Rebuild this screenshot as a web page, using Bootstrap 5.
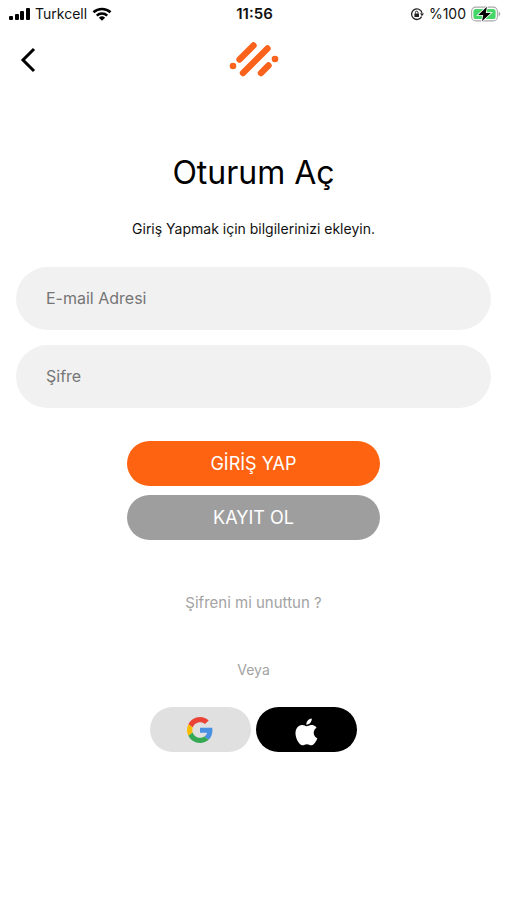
<!DOCTYPE html>
<html lang="tr">
<head>
<meta charset="utf-8">
<meta name="viewport" content="width=device-width, initial-scale=1">
<title>Oturum Aç</title>
<link href="https://cdn.jsdelivr.net/npm/bootstrap@5.3.0/dist/css/bootstrap.min.css" rel="stylesheet">
<style>
  body { font-family: Inter, "Noto Sans", sans-serif; font-size: 14px; line-height: 20px; color: #111; background: #fff; }
  svg { display: block; flex: none; }
  .status-bar { display: grid; grid-template-columns: 1fr auto 1fr; height: 28px; padding: 0 6px 0 8px; }
  .carrier { gap: 5px; }
  .power { gap: 5px; }
  .clock { font-weight: 600; font-size: 15px; }
  .top-nav { display: grid; grid-template-columns: 1fr auto 1fr; padding: 10px 16px; }
  .back { width: 24px; height: 44px; }
  .title { font-size: 32px; line-height: 40px; font-weight: 400; margin-top: 61px; margin-bottom: 26px; color: #000; }
  .field { height: 63px; padding: 0 30px 2px; border: 0; border-radius: 32px; background: #f1f1f1; font-size: 16px; }
  .field:focus { background: #f1f1f1; }
  .field::placeholder { color: #757575; }
  .field + .field { margin-top: 15px; }
  .actions, .social { --bs-gutter-x: 32px; }
  .actions { margin-top: 33px; gap: 9px; }
  .pill { --bs-btn-color: #fff; --bs-btn-hover-color: #fff; --bs-btn-active-color: #fff; height: 45px; padding: 0; border: 0; font-size: 18px; }
  .pill-login { --bs-btn-bg: #fe6312; --bs-btn-hover-bg: #e8560b; --bs-btn-active-bg: #e8560b; }
  .pill-join { --bs-btn-bg: #9e9e9e; --bs-btn-hover-bg: #8c8c8c; --bs-btn-active-bg: #8c8c8c; }
  .pill-google { --bs-btn-bg: #e0e0e0; --bs-btn-hover-bg: #d2d2d2; --bs-btn-active-bg: #d2d2d2; }
  .pill-apple { --bs-btn-bg: #000; --bs-btn-hover-bg: #222; --bs-btn-active-bg: #222; }
  .soft { color: #a3a3a3; }
  .forgot { margin-top: 53px; font-size: 15px; }
  .or-line { margin-top: 47px; margin-bottom: 27px; }
  .social { gap: 5px; }
  .social .pill { width: 20%; }
</style>
<script src="https://cdn.jsdelivr.net/npm/bootstrap@5.3.0/dist/js/bootstrap.bundle.min.js" defer></script>
</head>
<body>
<div class="status-bar align-items-center">
  <div class="carrier d-flex align-items-center">
    <svg width="22" height="14" viewBox="0 0 22 14"><rect x="1" y="9" width="4" height="4" rx="1"/><rect x="7" y="7" width="4" height="6" rx="1"/><rect x="12" y="4" width="4" height="9" rx="1"/><rect x="18" y="1" width="4" height="12" rx="1"/></svg>
    <span>Turkcell</span>
    <svg width="20" height="14" viewBox="0 0 20 14" fill="none" stroke="#000" stroke-width="2.6"><path d="M1.5 5.3C6.2.8 13.8.8 18.5 5.3M4.8 8.6c2.9-2.8 7.5-2.8 10.4 0"/><path d="M10 13.800 6.900 10.700a4.500 4.500 0 0 1 6.200 0Z" fill="#000" stroke="none"/></svg>
  </div>
  <span class="clock">11:56</span>
  <div class="power d-flex align-items-center justify-content-end">
    <svg width="14" height="14" viewBox="0 0 14 14" fill="none" stroke="#222" stroke-width="1.3"><path d="M11.600 9.600A5.300 5.300 0 1 1 12 5.800"/><path d="m10 6.300 4 .2-2.100 2.800Z" fill="#222" stroke="none"/><rect x="4.400" y="6.400" width="4.600" height="3.600" rx=".6" fill="#222" stroke="none"/><path d="M5.400 6.700V5.500a1.300 1.300 0 0 1 2.600 0v1.200" stroke-width="1"/></svg>
    <span>%100</span>
    <svg width="30" height="16" viewBox="0 0 30 16"><rect x=".6" y="1.1" width="25.8" height="13.8" rx="4.2" fill="#fff" stroke="#aaa" stroke-width="1.1"/><rect x="2.4" y="2.9" width="22.2" height="10.2" rx="2.6" fill="#45d667"/><path d="M27.6 5.6c2.2.8 2.2 4 0 4.8Z" fill="#aaa"/><path d="M15.9.8 7.2 8.9h5L11 15.2l8.8-8.1h-5Z" fill="#000" stroke="#fff" stroke-width="1.6" paint-order="stroke"/></svg>
  </div>
</div>
<header class="top-nav align-items-center">
  <button type="button" class="btn border-0 p-0 back d-flex align-items-center justify-content-center" aria-label="Geri">
    <svg width="24" height="28" viewBox="0 0 24 28" fill="none" stroke="#000" stroke-width="3"><path d="M18 3 7 14l11 11"/></svg>
  </button>
  <svg width="50" height="36" viewBox="0 0 50 36" fill="none" stroke="#fb631d" stroke-width="6.4" stroke-linecap="round" role="img" aria-label="Logo"><path d="M10.500 17.500 24.500 3.500M14 31 38.500 6.500M32 31l7.500-7.500"/><circle cx="4" cy="24" r="3.300" fill="#fb631d" stroke="none"/><circle cx="46" cy="17" r="3.300" fill="#fb631d" stroke="none"/></svg>
</header>
<main class="px-3 text-center">
  <h1 class="title">Oturum Aç</h1>
  <p class="mb-0">Giriş Yapmak için bilgilerinizi ekleyin.</p>
  <form class="mt-4 pt-1">
    <input class="form-control field" type="email" placeholder="E-mail Adresi" aria-label="E-mail Adresi">
    <input class="form-control field" type="password" placeholder="Şifre" aria-label="Şifre">
    <div class="actions row flex-column align-items-center">
      <button type="submit" class="btn pill pill-login rounded-pill w-50">GİRİŞ YAP</button>
      <button type="button" class="btn pill pill-join rounded-pill w-50">KAYIT OL</button>
    </div>
  </form>
  <div class="forgot"><a class="soft text-decoration-none" href="#">Şifreni mi unuttun ?</a></div>
  <p class="or-line soft">Veya</p>
  <div class="social row justify-content-center">
    <button type="button" class="btn pill pill-google rounded-pill d-flex align-items-center justify-content-center" aria-label="Google">
      <svg width="26" height="26" viewBox="0 0 48 48"><path fill="#ea4335" d="M24 9.500c3.540 0 6.710 1.220 9.210 3.600l6.850-6.850C35.900 2.380 30.470 0 24 0 14.620 0 6.510 5.380 2.560 13.220l7.980 6.190C12.430 13.720 17.740 9.500 24 9.500z"/><path fill="#4a90e2" d="M46.980 24.550c0-1.570-.15-3.090-.38-4.550H24v9.020h12.940c-.58 2.960-2.260 5.480-4.780 7.180l7.730 6c4.510-4.180 7.090-10.360 7.090-17.650z"/><path fill="#fbbc05" d="M10.530 28.590A14.500 14.500 0 0 1 9.770 24c0-1.600.27-3.140.76-4.590l-7.980-6.190A23.900 23.900 0 0 0 0 24c0 3.880.92 7.540 2.560 10.780l7.970-6.190z"/><path fill="#34a853" d="M24 48c6.480 0 11.930-2.130 15.890-5.810l-7.730-6C30 37.640 27.240 38.490 24 38.490c-6.260 0-11.570-4.220-13.470-9.910l-7.980 6.190C6.510 42.620 14.620 48 24 48z"/></svg>
    </button>
    <button type="button" class="btn pill pill-apple rounded-pill d-flex align-items-center justify-content-center" aria-label="Apple">
      <svg class="mt-1" width="32" height="32" viewBox="0 0 24 24" fill="#fff"><path d="M17.050 12.540c-.03-2.540 2.070-3.760 2.170-3.820-1.180-1.730-3.020-1.960-3.680-1.990-1.570-.16-3.060.92-3.860.92-.79 0-2.020-.9-3.320-.87-1.710.02-3.280.99-4.160 2.520-1.770 3.080-.45 7.640 1.280 10.140.84 1.220 1.850 2.600 3.170 2.550 1.270-.05 1.750-.82 3.290-.82s1.970.82 3.310.8c1.370-.03 2.240-1.250 3.080-2.480.97-1.420 1.370-2.790 1.390-2.870-.03-.01-2.670-1.020-2.670-4.080zM14.520 5.070c.7-.85 1.170-2.030 1.040-3.200-1.010.04-2.230.67-2.950 1.520-.65.75-1.220 1.950-1.070 3.100 1.130.09 2.280-.57 2.980-1.420z"/></svg>
    </button>
  </div>
</main>
</body>
</html>
